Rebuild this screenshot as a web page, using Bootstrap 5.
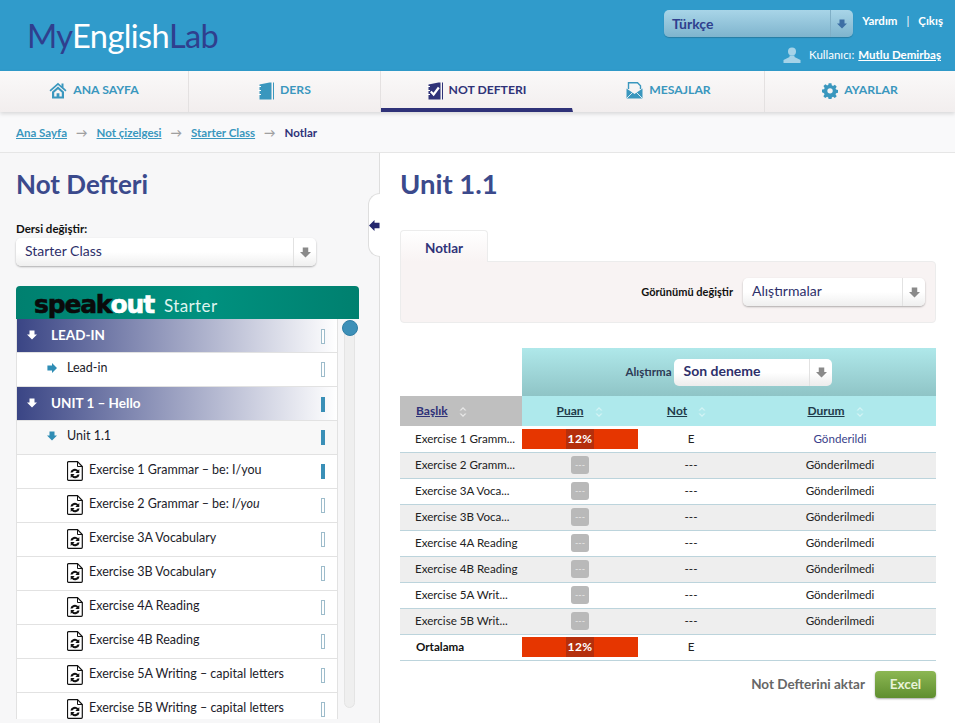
<!DOCTYPE html>
<html lang="tr">
<head>
  <meta charset="UTF-8" />
  <meta name="viewport" content="width=device-width, initial-scale=1.0">
  <title>Not Defteri</title>
  <link href="https://cdn.jsdelivr.net/npm/bootstrap@5.3.3/dist/css/bootstrap.min.css" rel="stylesheet">
  <style>
    html, body { height: 723px; overflow: hidden; }
    body { font-family: "Lato", "Noto Sans", sans-serif; font-size: 12px; color: #222; background: #fff; }
    a { color: inherit; }

    .top-bar { height: 71px; background: #309bcb; padding: 0 12px 0 27px; }
    .logo { font-size: 32.600px; line-height: 1; letter-spacing: -.6px; color: #2f3f8e; padding-top: 20px; }
    .logo b { font-weight: 400; color: #fff; }
    .top-right { width: 279px; padding-top: 10px; }
    .lang-select { width: 189px; height: 27px; border-radius: 5px; background: linear-gradient(#a8d5e8, #7fb4cd); box-shadow: 0 1px 1px rgba(0,0,0,.2); font-size: 14px; font-weight: 700; color: #2f3f8e; padding-left: 8px; }
    .lang-select .sel-arrow { border-left: 1px solid #80afc6; height: 100%; width: 23px; }
    .top-links { font-weight: 700; color: #fff; font-size: 11.5px; padding-top: 2px; }
    .top-links i { font-style: normal; font-weight: 400; margin: 0 9px; }
    .user-line { color: #fff; font-size: 11.5px; margin-top: 9px; height: 18px; padding-right: 2px; }
    .user-line a { font-weight: 700; margin-left: 4px; }

    .main-nav { height: 41px; background: linear-gradient(#faf9f9, #f2eeee); box-shadow: 0 2px 4px rgba(0,0,0,.13); position: relative; }
    .main-nav .nav-link { height: 41px; width: 192px; padding: 0 0 2px; gap: 6px; color: #3a97be; font-size: 12.200px; font-weight: 700; border-right: 1px solid #e4e1e1; }
    .main-nav .nav-link:first-child { width: 189px; }
    .main-nav .nav-link:last-child { flex: 1; border: 0; }
    .main-nav .nav-link.active { color: #2f3278; border-bottom: 4px solid #2f3278; border-right-color: transparent; padding-top: 4px; }

    .crumbs { height: 41px; background: #f9f9fa; border-bottom: 1px solid #e6e6e6; padding: 1px 16px 0; --bs-breadcrumb-divider: "→"; --bs-breadcrumb-margin-bottom: 0; --bs-breadcrumb-item-padding-x: 9px; --bs-breadcrumb-divider-color: #a0a0a0; font-weight: 700; font-size: 11.500px; }
    .crumbs a { color: #3a97be; }
    .crumbs .active { color: #2f3278; }

    .page-body { height: 571px; }
    .side-col { width: 380px; background: #f7f7f8; border-right: 1px solid #dedede; padding: 14px 20px 0 16px; position: relative; flex: none; }
    .main-col { flex: 1; padding: 14px 19px 0 20px; }
    .page-title { font-size: 26px; font-weight: 700; color: #3b4a8c; margin: 0; line-height: 34px; }
    .main-col .page-title { font-size: 27.500px; }
    .side-label { font-weight: 700; color: #111; margin-top: 20px; line-height: 15px; font-size: 11.500px; }

    .soft-select { height: 28px; border-radius: 5px; background: linear-gradient(#fff 50%, #efefef); box-shadow: 0 1px 2px rgba(0,0,0,.3); font-size: 14px; color: #2d2f6a; padding-left: 9px; }
    .soft-select > span:first-child { padding-bottom: 4px; }
    .soft-select .sel-arrow { border-left: 1px solid #e2e2e2; height: 100%; width: 23px; }
    .side-select { width: 300px; margin-top: 2px; }

    .collapse-tab { position: absolute; left: 368px; top: 40px; width: 12px; height: 64px; background: #fff; border: 1px solid #dedede; border-right: 0; border-radius: 12px 0 0 12px; }

    .book-banner { width: 343px; height: 33px; margin-top: 20px; border-radius: 4px 4px 0 0; background: linear-gradient(90deg, #00806f, #00917f 55%, #00806f); padding: 5px 0 0 18px; gap: 10px; overflow: hidden; }
    .book-brand { font-family: "DejaVu Sans", sans-serif; font-weight: 700; font-size: 25px; line-height: 28px; letter-spacing: -1.2px; color: #0a0a0a; -webkit-text-stroke: .6px #0a0a0a; }
    .book-brand span { color: #fff; -webkit-text-stroke: .6px #fff; }
    .book-level { color: #dff4ef; font-size: 17px; line-height: 30px; letter-spacing: .4px; }

    .tree-wrap { height: 400px; position: relative; }
    .tree-list { width: 322px; height: 400px; overflow: hidden; border-radius: 0; }
    .tree-list .list-group-item { flex: none; height: 34px; padding: 0 12px 0 10px; border: 1px solid #e2e2e2; border-width: 0 1px 1px 1px; font-size: 12.500px; color: #1c1c2a; gap: 10px; background: #fff; }
    .tree-list .tree-unit { background: linear-gradient(90deg, #3a4585, #fff); color: #fff; font-weight: 700; gap: 14px; font-size: 13.500px; padding-bottom: 1px; }
    .tree-list .tree-lesson { padding-left: 30px; padding-bottom: 3px; }
    .tree-list .tree-open { background: #f8f8f8; }
    .tree-list .tree-ex { padding-left: 50px; gap: 6px; align-items: flex-start !important; padding-top: 6px; }
    .tree-list .tree-ex .ex-title { line-height: 15px; margin-top: 1px; }
    .tree-list .tree-ex svg { flex: none; }
    .mark-bar { width: 4px; height: 15px; border: 1px solid #9dbccb; background: #fff; margin-left: auto; flex: none; }
    .mark-bar.done { background: #3a8fb7; border-color: #3a8fb7; }
    .tree-unit .mark-bar, .tree-lesson .mark-bar { margin-top: 3px; }
    .tree-ex .mark-bar { margin-top: 3px; }
    .scroll-track { position: absolute; left: 328px; top: 6px; width: 11px; height: 383px; background: #efefef; border: 1px solid #e4e4e4; border-radius: 0 0 6px 6px; }
    .scroll-thumb { position: absolute; left: 326px; top: 1px; width: 16px; height: 16px; border-radius: 50%; background: #3d90b8; border: 1px solid #2f7ea5; }

    .tab-label { display: block; width: 88px; height: 32px; text-align: center; line-height: 34px; font-size: 13.500px; font-weight: 700; color: #2f3278; background: linear-gradient(#fff, #f8f3f3); border: 1px solid #ececec; border-bottom: 0; border-radius: 4px 4px 0 0; margin-top: 29px; margin-bottom: -1px; position: relative; z-index: 1; }
    .view-panel { height: 62px; background: #f8f3f3; border: 1px solid #ececec; border-radius: 0 4px 4px 4px; padding: 0 10px; gap: 10px; }
    .view-panel b { color: #111; font-size: 11px; }
    .view-select { width: 182px; }

    .table.grade-table { table-layout: fixed; width: 536px; margin: 25px 0 0; --bs-table-bg: transparent; font-size: 11.600px; color: #222; }
    .table.grade-table > thead > tr > *, .table.grade-table > tbody > tr > * { border: 0; padding: 0; vertical-align: middle; box-shadow: none; }
    .table.grade-table .head-top { height: 48px; background: linear-gradient(#afe8ea, #8fc4c6); text-align: center; }
    .head-inner { gap: 3px; font-weight: 700; color: #2d3a55; font-size: 11.5px; }
    .attempt-select { width: 158px; height: 27px; background: linear-gradient(#fff 50%, #ececec); font-weight: 700; font-size: 14px; color: #2d2f6a; box-shadow: none; }
    .grade-table .head-sort th { height: 30px; background: #aee9ec; text-align: center; font-size: 12px; font-weight: 700; color: #1f3a4a; }
    .table.grade-table .head-sort th:first-child { background: #bfbfbf; text-align: left; padding-left: 16px; color: #2f3278; }
    .grade-table .head-sort a { margin-right: 10px; }
    .table.grade-table .head-sort .sort-shift { padding-right: 8px; }
    .table.grade-table > tbody > tr > td { height: 26px; text-align: center; border-bottom: 1px solid #bcd4dc; }
    .table.grade-table > tbody > tr > td:first-child { text-align: left; padding-left: 15px; white-space: nowrap; overflow: hidden; }
    .table.grade-table > tbody > tr:nth-child(even) > td { background: #eeeeee; }
    .grade-table .sent { color: #3a3f8a; }
    .score-fill { height: 20px; background: #e63600; color: #fff; font-weight: 700; display: flex; align-items: center; justify-content: center; font-size: 12px; }
    .score-fill span { background: #b52f0c; padding: 0 2px; line-height: 20px; letter-spacing: .4px; }
    .score-empty { display: flex; width: 18px; height: 18px; margin: 0 auto; border-radius: 3px; background: #b9b9b9; color: #e8e8e8; font-size: 9px; align-items: center; justify-content: center; }
    .table.grade-table .avg-row td:first-child { font-weight: 700; color: #111; padding-left: 16px; }
    .export-row { margin-top: 10px; gap: 10px; }
    .export-row b { color: #666; font-size: 13.500px; }
    .btn-excel { --bs-btn-padding-x: 0; --bs-btn-padding-y: 0; width: 61px; height: 27px; background: linear-gradient(#8cb753, #5f8e2f); color: #e8f3d8; border: 0; border-radius: 4px; box-shadow: 0 1px 2px rgba(0,0,0,.35); font-size: 13.500px; font-weight: 700; }
  </style>
</head>
<body>
  <svg width="0" height="0" class="d-block" aria-hidden="true">
    <symbol id="ico-arrow-down" viewBox="0 0 12 12"><path d="M3 .5h6v5h3L6 11.500 0 5.500h3z" fill="currentColor"/></symbol>
    <symbol id="ico-arrow-right" viewBox="0 0 12 12"><path d="M.5 3h5.500V0l6 6-6 6V9H.5z" fill="currentColor"/></symbol>
    <symbol id="ico-arrow-left" viewBox="0 0 12 12"><path d="M11.500 3H6V0L0 6l6 6V9h5.500z" fill="currentColor"/></symbol>
    <symbol id="ico-file" viewBox="0 0 16 20"><path d="M1.500.7h9l4.800 4.800v12.800a1 1 0 0 1-1 1H1.500a1 1 0 0 1-1-1V1.700a1 1 0 0 1 1-1z" fill="#fff" stroke="#111" stroke-width="1.200"/><path d="M10.500.7v4.800h4.800" fill="none" stroke="#111"/><path d="M3.400 11.500a4.500 4.500 0 0 1 7.800-2.300l1.100-1.100v3.900H8.400l1.400-1.400a2.600 2.600 0 0 0-4.300 1zM12.600 13.500a4.500 4.500 0 0 1-7.800 2.300l-1.100 1.100V13h3.900l-1.400 1.400a2.600 2.600 0 0 0 4.300-1z" fill="#111"/></symbol>
    <symbol id="ico-sort" viewBox="0 0 10 12"><path d="M5 1 8.500 4.500H6.800L5 2.800 3.200 4.500H1.500zM5 11 1.500 7.500h1.700L5 9.200l1.800-1.700h1.700z" fill="currentColor"/></symbol>
    <symbol id="ico-home" viewBox="0 0 18 17"><path d="M9 .8.500 8.200l1.100 1.200L9 3l7.400 6.400 1.100-1.200-3-2.600V1.500h-2v2.400z" fill="currentColor"/><path d="M3 9.800 9 4.500l6 5.300V16.500H3zm2.200.7v4h2.400v-3.200h2.800v3.200h2.400v-4L9 7.300z" fill="currentColor" fill-rule="evenodd"/></symbol>
    <symbol id="ico-book" viewBox="0 0 16 18"><path d="M1.500 2.500 11.500.5H13.500V17.500H1.500z" fill="currentColor"/><path d="M15 .5h1v17h-1z" fill="currentColor"/><path d="M0 4.500h3M0 8.500h3M0 12.500h3" stroke="#fff" stroke-width="1"/></symbol>
    <symbol id="ico-book-check" viewBox="0 0 16 18"><path d="M1.500 2.500 11.500.5H13.500V17.500H1.500z" fill="currentColor"/><path d="M15 .5h1v17h-1z" fill="currentColor"/><path d="M0 4.500h3M0 8.500h3M0 12.500h3" stroke="#fff" stroke-width="1"/><path d="M3.800 9.500 6.600 12.500 11.800 5.500" fill="none" stroke="#fff" stroke-width="2.200"/></symbol>
    <symbol id="ico-mail" viewBox="0 0 17 17"><path d="M2.500 7V.7h9l3 3V7" fill="none" stroke="currentColor" stroke-width="1.400"/><path d="M.5 6.500v10h16v-10L8.500 12z" fill="currentColor"/><path d="M.5 16.500 6.500 10.500M16.500 16.500 10.500 10.500" stroke="#fff" stroke-width=".8"/></symbol>
    <symbol id="ico-gear" viewBox="0 0 16 16"><path d="M6.500 0h3l.4 2.300 1.300.6 2-1.300 2 2.100-1.300 1.900.6 1.300 2.300.4v3l-2.300.4-.6 1.300 1.300 2-2.100 2-1.900-1.300-1.300.6-.4 2.300h-3l-.4-2.300-1.300-.6-2 1.300-2-2.100 1.300-1.900-.6-1.300L-.7 9.800v-3l2.300-.4.6-1.300-1.300-2 2.100-2 1.900 1.300 1.300-.6zM8 5.300a2.900 2.900 0 1 0 0 5.800 2.900 2.900 0 0 0 0-5.800z" transform="translate(.6 .2) scale(.93)" fill="currentColor" fill-rule="evenodd"/></symbol>
    <symbol id="ico-user" viewBox="0 0 18 16"><circle cx="9" cy="4.500" r="4" fill="currentColor"/><path d="M6.500 8.500h5v1.500l6 3V16H.5v-3l6-3z" fill="currentColor"/></symbol>
  </svg>

  <header class="top-bar d-flex justify-content-between">
    <div class="logo">My<b>English</b>Lab</div>
    <div class="top-right">
      <div class="d-flex justify-content-between">
        <div class="lang-select d-flex align-items-center justify-content-between">
          <span>Türkçe</span>
          <span class="sel-arrow d-flex align-items-center justify-content-center"><svg width="10" height="10"><use href="#ico-arrow-down" style="color:#3d6fa5"/></svg></span>
        </div>
        <div class="top-links"><span>Yardım</span><i>|</i><span>Çıkış</span></div>
      </div>
      <div class="user-line d-flex align-items-center justify-content-end">
        <svg class="me-2" width="18" height="16"><use href="#ico-user" style="color:#a5d3e8"/></svg>
        <span>Kullanıcı:</span> <a href="#">Mutlu Demirbaş</a>
      </div>
    </div>
  </header>

  <nav class="nav main-nav">
    <a class="nav-link d-flex align-items-center justify-content-center" href="#"><svg width="18" height="17"><use href="#ico-home"/></svg>ANA SAYFA</a>
    <a class="nav-link d-flex align-items-center justify-content-center" href="#"><svg width="16" height="18"><use href="#ico-book"/></svg>DERS</a>
    <a class="nav-link active d-flex align-items-center justify-content-center" href="#"><svg width="16" height="18"><use href="#ico-book-check"/></svg>NOT DEFTERI</a>
    <a class="nav-link d-flex align-items-center justify-content-center" href="#"><svg width="17" height="17"><use href="#ico-mail"/></svg>MESAJLAR</a>
    <a class="nav-link d-flex align-items-center justify-content-center" href="#"><svg width="16" height="16"><use href="#ico-gear"/></svg>AYARLAR</a>
  </nav>

  <ol class="breadcrumb crumbs align-items-center">
    <li class="breadcrumb-item"><a href="#">Ana Sayfa</a></li>
    <li class="breadcrumb-item"><a href="#">Not çizelgesi</a></li>
    <li class="breadcrumb-item"><a href="#">Starter Class</a></li>
    <li class="breadcrumb-item active">Notlar</li>
  </ol>

  <div class="page-body d-flex">
    <aside class="side-col">
      <h1 class="page-title">Not Defteri</h1>
      <div class="collapse-tab d-flex align-items-center justify-content-center"><svg width="11" height="11"><use href="#ico-arrow-left" style="color:#23266e"/></svg></div>
      <div class="side-label">Dersi değiştir:</div>
      <div class="soft-select side-select d-flex align-items-center justify-content-between">
        <span>Starter Class</span>
        <span class="sel-arrow d-flex align-items-center justify-content-center"><svg width="11" height="11"><use href="#ico-arrow-down" style="color:#8a8a8a"/></svg></span>
      </div>

      <div class="book-banner d-flex">
        <div class="book-brand">speak<span>out</span></div>
        <div class="book-level">Starter</div>
      </div>
      <div class="tree-wrap">
        <ul class="list-group tree-list">
          <li class="list-group-item tree-unit d-flex align-items-center"><svg width="10" height="10"><use href="#ico-arrow-down"/></svg>LEAD-IN<span class="mark-bar"></span></li>
          <li class="list-group-item tree-lesson d-flex align-items-center"><svg width="10" height="10"><use href="#ico-arrow-right" style="color:#2f8db5"/></svg>Lead-in<span class="mark-bar"></span></li>
          <li class="list-group-item tree-unit d-flex align-items-center"><svg width="10" height="10"><use href="#ico-arrow-down"/></svg>UNIT 1 – Hello<span class="mark-bar done"></span></li>
          <li class="list-group-item tree-lesson tree-open d-flex align-items-center"><svg width="10" height="10"><use href="#ico-arrow-down" style="color:#2f8db5"/></svg>Unit 1.1<span class="mark-bar done"></span></li>
          <li class="list-group-item tree-ex d-flex"><svg width="16" height="20"><use href="#ico-file"/></svg><span class="ex-title">Exercise 1 Grammar – be: I/you</span><span class="mark-bar done"></span></li>
          <li class="list-group-item tree-ex d-flex"><svg width="16" height="20"><use href="#ico-file"/></svg><span class="ex-title">Exercise 2 Grammar – be: <em>I/you</em></span><span class="mark-bar"></span></li>
          <li class="list-group-item tree-ex d-flex"><svg width="16" height="20"><use href="#ico-file"/></svg><span class="ex-title">Exercise 3A Vocabulary</span><span class="mark-bar"></span></li>
          <li class="list-group-item tree-ex d-flex"><svg width="16" height="20"><use href="#ico-file"/></svg><span class="ex-title">Exercise 3B Vocabulary</span><span class="mark-bar"></span></li>
          <li class="list-group-item tree-ex d-flex"><svg width="16" height="20"><use href="#ico-file"/></svg><span class="ex-title">Exercise 4A Reading</span><span class="mark-bar"></span></li>
          <li class="list-group-item tree-ex d-flex"><svg width="16" height="20"><use href="#ico-file"/></svg><span class="ex-title">Exercise 4B Reading</span><span class="mark-bar"></span></li>
          <li class="list-group-item tree-ex d-flex"><svg width="16" height="20"><use href="#ico-file"/></svg><span class="ex-title">Exercise 5A Writing – capital letters</span><span class="mark-bar"></span></li>
          <li class="list-group-item tree-ex d-flex"><svg width="16" height="20"><use href="#ico-file"/></svg><span class="ex-title">Exercise 5B Writing – capital letters</span><span class="mark-bar"></span></li>
        </ul>
        <div class="scroll-track"></div>
        <div class="scroll-thumb"></div>
      </div>
    </aside>

    <main class="main-col">
      <h1 class="page-title">Unit 1.1</h1>
      <div class="tab-label">Notlar</div>
      <div class="view-panel d-flex align-items-center justify-content-end">
        <b>Görünümü değiştir</b>
        <div class="soft-select view-select d-flex align-items-center justify-content-between">
          <span>Alıştırmalar</span>
          <span class="sel-arrow d-flex align-items-center justify-content-center"><svg width="11" height="11"><use href="#ico-arrow-down" style="color:#8a8a8a"/></svg></span>
        </div>
      </div>

      <table class="table grade-table">
        <colgroup><col style="width:122px"><col style="width:116px"><col style="width:106px"><col></colgroup>
        <thead>
          <tr>
            <th></th>
            <th colspan="3" class="head-top">
              <div class="head-inner d-flex align-items-center justify-content-center">
                <span>Alıştırma</span>
                <div class="soft-select attempt-select d-flex align-items-center justify-content-between">
                  <span>Son deneme</span>
                  <span class="sel-arrow d-flex align-items-center justify-content-center"><svg width="11" height="11"><use href="#ico-arrow-down" style="color:#8a8a8a"/></svg></span>
                </div>
              </div>
            </th>
          </tr>
          <tr class="head-sort">
            <th><a href="#">Başlık</a><svg width="10" height="12"><use href="#ico-sort" style="color:#e8e8e8"/></svg></th>
            <th><a href="#">Puan</a><svg width="10" height="12"><use href="#ico-sort" style="color:#d3f3f4"/></svg></th>
            <th class="sort-shift"><a href="#">Not</a><svg width="10" height="12"><use href="#ico-sort" style="color:#d3f3f4"/></svg></th>
            <th class="sort-shift"><a href="#">Durum</a><svg width="10" height="12"><use href="#ico-sort" style="color:#d3f3f4"/></svg></th>
          </tr>
        </thead>
        <tbody>
          <tr><td>Exercise 1 Gramm...</td><td><div class="score-fill"><span>12%</span></div></td><td>E</td><td class="sent">Gönderildi</td></tr>
          <tr><td>Exercise 2 Gramm...</td><td><span class="score-empty">---</span></td><td>---</td><td>Gönderilmedi</td></tr>
          <tr><td>Exercise 3A Voca...</td><td><span class="score-empty">---</span></td><td>---</td><td>Gönderilmedi</td></tr>
          <tr><td>Exercise 3B Voca...</td><td><span class="score-empty">---</span></td><td>---</td><td>Gönderilmedi</td></tr>
          <tr><td>Exercise 4A Reading</td><td><span class="score-empty">---</span></td><td>---</td><td>Gönderilmedi</td></tr>
          <tr><td>Exercise 4B Reading</td><td><span class="score-empty">---</span></td><td>---</td><td>Gönderilmedi</td></tr>
          <tr><td>Exercise 5A Writ...</td><td><span class="score-empty">---</span></td><td>---</td><td>Gönderilmedi</td></tr>
          <tr><td>Exercise 5B Writ...</td><td><span class="score-empty">---</span></td><td>---</td><td>Gönderilmedi</td></tr>
          <tr class="avg-row"><td>Ortalama</td><td><div class="score-fill"><span>12%</span></div></td><td>E</td><td></td></tr>
        </tbody>
      </table>

      <div class="export-row d-flex align-items-center justify-content-end">
        <b>Not Defterini aktar</b>
        <button class="btn btn-excel" type="button">Excel</button>
      </div>
    </main>
  </div>

  <script src="https://cdn.jsdelivr.net/npm/bootstrap@5.3.3/dist/js/bootstrap.bundle.min.js"></script>
</body>
</html>
